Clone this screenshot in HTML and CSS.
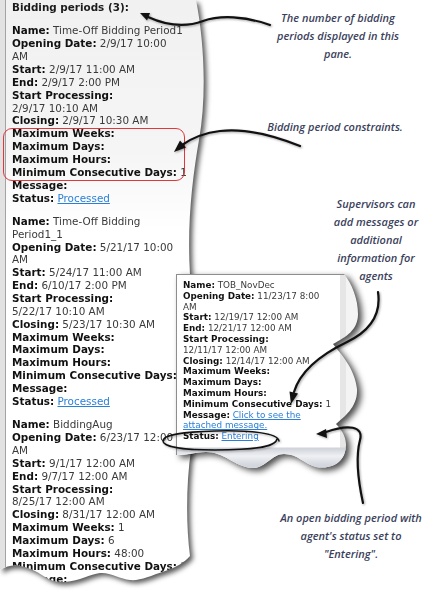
FILE: index.html
```html
<!DOCTYPE html>
<html>
<head>
<meta charset="utf-8">
<link rel="stylesheet" href="styles.css">
</head>
<body>
<div class="canvas">
  <div class="pane-shadow">
    <div class="pane">
      <div class="pane-title">Bidding periods (3):</div>
      <div class="period">
        <div class="row"><b>Name:</b> Time-Off Bidding Period1</div>
        <div class="row"><b>Opening Date:</b> 2/9/17 10:00<br>AM</div>
        <div class="row"><b>Start:</b> 2/9/17 11:00 AM</div>
        <div class="row"><b>End:</b> 2/9/17 2:00 PM</div>
        <div class="row"><b>Start Processing:</b><br>2/9/17 10:10 AM</div>
        <div class="row"><b>Closing:</b> 2/9/17 10:30 AM</div>
        <div class="row"><b>Maximum Weeks:</b></div>
        <div class="row"><b>Maximum Days:</b></div>
        <div class="row"><b>Maximum Hours:</b></div>
        <div class="row"><b>Minimum Consecutive Days:</b> 1</div>
        <div class="row"><b>Message:</b></div>
        <div class="row"><b>Status:</b> <a class="link">Processed</a></div>
      </div>
      <div class="period">
        <div class="row"><b>Name:</b> Time-Off Bidding<br>Period1_1</div>
        <div class="row"><b>Opening Date:</b> 5/21/17 10:00<br>AM</div>
        <div class="row"><b>Start:</b> 5/24/17 11:00 AM</div>
        <div class="row"><b>End:</b> 6/10/17 2:00 PM</div>
        <div class="row"><b>Start Processing:</b><br>5/22/17 10:10 AM</div>
        <div class="row"><b>Closing:</b> 5/23/17 10:30 AM</div>
        <div class="row"><b>Maximum Weeks:</b></div>
        <div class="row"><b>Maximum Days:</b></div>
        <div class="row"><b>Maximum Hours:</b></div>
        <div class="row"><b>Minimum Consecutive Days:</b></div>
        <div class="row"><b>Message:</b></div>
        <div class="row"><b>Status:</b> <a class="link">Processed</a></div>
      </div>
      <div class="period">
        <div class="row"><b>Name:</b> BiddingAug</div>
        <div class="row"><b>Opening Date:</b> 6/23/17 12:00<br>AM</div>
        <div class="row"><b>Start:</b> 9/1/17 12:00 AM</div>
        <div class="row"><b>End:</b> 9/7/17 12:00 AM</div>
        <div class="row"><b>Start Processing:</b><br>8/25/17 12:00 AM</div>
        <div class="row"><b>Closing:</b> 8/31/17 12:00 AM</div>
        <div class="row"><b>Maximum Weeks:</b> 1</div>
        <div class="row"><b>Maximum Days:</b> 6</div>
        <div class="row"><b>Maximum Hours:</b> 48:00</div>
        <div class="row"><b>Minimum Consecutive Days:</b> 1</div>
        <div class="row"><b>Message:</b></div>
        <div class="row"><b>Status:</b> <a class="link">Processed</a></div>
      </div>
    </div>
  </div>

  <div class="constraint-box"></div>

  <div class="popup-shadow">
    <div class="popup">
      <div class="prow"><b>Name:</b> TOB_NovDec</div>
      <div class="prow"><b>Opening Date:</b> 11/23/17 8:00<br>AM</div>
      <div class="prow"><b>Start:</b> 12/19/17 12:00 AM</div>
      <div class="prow"><b>End:</b> 12/21/17 12:00 AM</div>
      <div class="prow"><b>Start Processing:</b><br>12/11/17 12:00 AM</div>
      <div class="prow"><b>Closing:</b> 12/14/17 12:00 AM</div>
      <div class="prow"><b>Maximum Weeks:</b></div>
      <div class="prow"><b>Maximum Days:</b></div>
      <div class="prow"><b>Maximum Hours:</b></div>
      <div class="prow"><b>Minimum Consecutive Days:</b> 1</div>
      <div class="prow"><b>Message:</b> <a class="link">Click to see the<br>attached message.</a></div>
      <div class="prow"><b>Status:</b> <a class="link">Entering</a></div>
    </div>
  </div>

  <svg class="arrows" width="442" height="599" viewBox="0 0 442 599">
    <g class="ink">
      <path d="M270,25 C245,16 220,15 203,21 C187,27 170,27 148,17"/>
      <path d="M300,146 C275,136 245,128 220,131 C203,133 192,138 182,145"/>
      <path d="M378,292 C381,312 372,330 347,342 C318,356 300,372 294,392"/>
      <path d="M363,503 C358,480 356,455 360,440 C364,426 348,424 326,432"/>
      <path class="thin" d="M279,441 C278,433 250,430 215,431 C185,432 163,434 163,441 C163,447 185,450 215,450 C250,450 275,448 277,439"/>
    </g>
    <g class="heads">
      <polygon points="140,13 147,20.5 150,13"/>
      <polygon points="174,152 186,147.5 180,140.5"/>
      <polygon points="291,404 298,393.5 289.5,391.5"/>
      <polygon points="316,434 327,438 326,429"/>
    </g>
  </svg>

  <p class="note note-count">The number of bidding<br>periods displayed in this<br>pane.</p>
  <p class="note note-constraints">Bidding period constraints.</p>
  <p class="note note-supervisors">Supervisors can<br>add messages or<br>additional<br>information for<br>agents</p>
  <p class="note note-entering">An open bidding period with<br>agent's status set to<br>"Entering".</p>
</div>
</body>
</html>
```

FILE: styles.css
```css
html, body {
  margin: 0;
  padding: 0;
  background: #ffffff;
}

.canvas {
  position: relative;
  width: 442px;
  height: 599px;
  overflow: hidden;
  background: #ffffff;
  font-family: "DejaVu Sans", Verdana, sans-serif;
}

/* Left torn pane */
.pane-shadow {
  width: 215px;
  height: 599px;
  filter: drop-shadow(3px 3px 2.5px rgba(0, 0, 0, 0.65));
}

.pane {
  width: 215px;
  height: 599px;
  box-sizing: border-box;
  padding: 1px 0 0 12px;
  font-size: 10.4px;
  line-height: 12.86px;
  color: #3a3a3a;
  background:
    linear-gradient(to right, #e2e2e2 0 5px, #a3a3a3 5px 6px, transparent 6px),
    linear-gradient(to bottom, #f1f1f1 0, #f5f5f5 150px, #ffffff 230px);
  clip-path: path('M0,0 L196,0 C204,40 207,95 199,140 C192,180 187,225 190,275 L191,450 C186,485 186,525 190,556 C185,562 175,568 165,571 C150,576 140,581 130,580 C120,579 110,572 100,573 C90,574 80,581 65,582 C50,583 45,576 35,571 C25,566 12,562 0,570 Z');
}

.pane-title {
  font-weight: bold;
  color: #1c1c1c;
  white-space: nowrap;
}

.period {
  margin-top: 10.5px;
}

.row,
.prow {
  white-space: nowrap;
}

.row b,
.prow b {
  color: #111111;
}

.link {
  color: #2a7fd8;
  text-decoration: underline;
}

/* Red constraints outline */
.constraint-box {
  position: absolute;
  left: 3px;
  top: 128px;
  width: 182px;
  height: 53px;
  box-sizing: border-box;
  border: 1.5px solid #e0363c;
  border-radius: 9px;
}

/* Popup (open bidding period) */
.popup-shadow {
  position: absolute;
  left: 176px;
  top: 274px;
  width: 200px;
  height: 210px;
  filter: drop-shadow(4px 3px 3px rgba(0, 0, 0, 0.7));
}

.popup {
  width: 200px;
  height: 210px;
  box-sizing: border-box;
  padding: 5px 0 0 6px;
  border-top: 1px solid #8e8e8e;
  border-left: 1px solid #8e8e8e;
  font-size: 8.8px;
  line-height: 10.8px;
  color: #3a3a3a;
  background:
    linear-gradient(to bottom, transparent 172px, #cfd2d9 173px, #eef0f3 181px, #d3d6dd 190px),
    linear-gradient(to right, #ffffff 163px, #e6e6e6 163px 169px, #f4f4f4 169px);
  clip-path: path('M0,0 L168,0 C176,10 182,25 182,40 C182,56 170,63 157,70 C165,80 179,95 181,115 C182,133 168,143 160,150 C168,158 173,168 168,181 C163,192 150,195 140,193 C128,190 122,180 108,180 C95,180 90,195 75,194 C58,192 48,178 30,178 C20,178 12,181 4,181 L0,181 Z');
}

/* Arrows overlay */
.arrows {
  position: absolute;
  left: 0;
  top: 0;
  pointer-events: none;
  filter: drop-shadow(1px 1px 1px rgba(0, 0, 0, 0.35));
}

.ink path {
  fill: none;
  stroke: #111111;
  stroke-width: 2.2;
  stroke-linecap: round;
}

.ink path.thin {
  stroke-width: 1.5;
}

.heads polygon {
  fill: #111111;
}

/* Handwritten annotations */
.note {
  position: absolute;
  margin: 0;
  font-family: "Open Sans", "Noto Sans", sans-serif;
  font-style: italic;
  font-weight: 600;
  font-size: 11px;
  line-height: 17.8px;
  color: #3b3f5c;
  text-align: center;
  white-space: nowrap;
}

.note-count {
  left: 258px;
  top: 9px;
  width: 160px;
}

.note-constraints {
  left: 255px;
  top: 118px;
  width: 160px;
}

.note-supervisors {
  left: 316px;
  top: 195px;
  width: 120px;
  line-height: 18px;
}

.note-entering {
  left: 261px;
  top: 509px;
  width: 180px;
}
```
